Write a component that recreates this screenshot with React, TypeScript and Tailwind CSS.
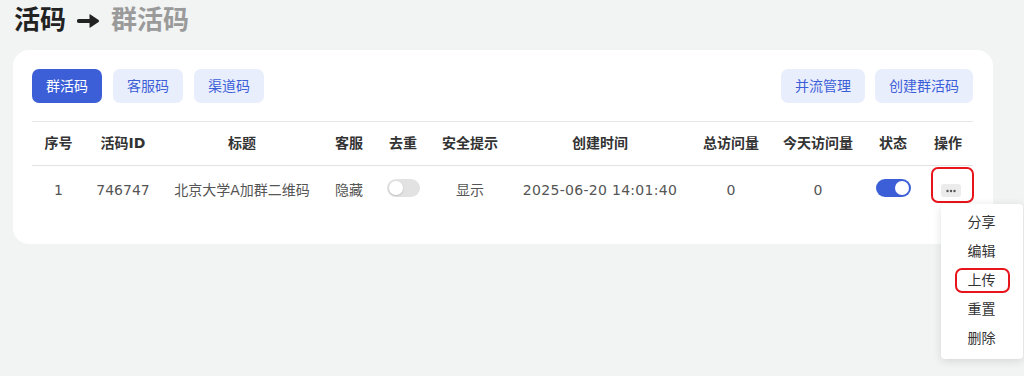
import React from "react";

const FONT = '"DejaVu Sans", "Noto Sans CJK SC", sans-serif';

const cols = [
  { w: 59, cls: "pr-[6px]" },
  { w: 91, cls: "pr-[27px]" },
  { w: 114, cls: "pl-[6px]" },
  { w: 80, cls: "pl-[26px]" },
  { w: 60, cls: "pr-[6px]" },
  { w: 99, cls: "pr-[31px]" },
  { w: 130, cls: "" },
  { w: 110, cls: "pl-[22px]" },
  { w: 81, cls: "pl-[5px]" },
  { w: 64, cls: "pl-[10px]" },
  { w: 53, cls: "pl-[3px]" },
];

const gridCls =
  "grid grid-cols-[59px_91px_114px_80px_60px_99px_130px_110px_81px_64px_53px]";

function Toggle({ on }: { on: boolean }) {
  return on ? (
    <div className="w-[35px] h-[18px] rounded-full bg-[#3c5fd8] flex items-center justify-end pr-[2px] mb-[5px]">
      <div className="w-[14px] h-[14px] rounded-full bg-white" />
    </div>
  ) : (
    <div className="w-[33px] h-[18px] rounded-full bg-[#e2e2e2] flex items-center justify-start pl-[2px] mb-[5px]">
      <div className="w-[14px] h-[14px] rounded-full bg-white shadow-[0_1px_2px_rgba(0,0,0,0.15)]" />
    </div>
  );
}

export default function App() {
  const headers = [
    "序号",
    "活码ID",
    "标题",
    "客服",
    "去重",
    "安全提示",
    "创建时间",
    "总访问量",
    "今天访问量",
    "状态",
    "操作",
  ];
  const menu = ["分享", "编辑", "上传", "重置", "删除"];

  return (
    <div
      className="w-[1024px] h-[376px] bg-[#f2f3f3] overflow-hidden"
      style={{ fontFamily: FONT }}
    >
      <div className="h-[50px] pl-[14px] pt-[7px]">
        <div className="flex items-center text-[26px] leading-[26px] font-bold whitespace-nowrap">
          <span className="text-[#222222]">活码</span>
          <svg
            className="mx-[11px] mt-[1px]"
            width="23"
            height="16"
            viewBox="0 0 23 16"
          >
            <path
              d="M2 8 H15"
              stroke="#222222"
              strokeWidth="4.2"
              strokeLinecap="round"
            />
            <path
              d="M12.5 2.2 Q12.2 1 13.4 1.4 L21.6 7 Q22.6 8 21.6 9 L13.4 14.6 Q12.2 15 12.5 13.8 Z"
              fill="#222222"
            />
          </svg>
          <span className="text-[#9a9a9a]">群活码</span>
        </div>
      </div>

      <div className="w-[980px] ml-[13px] bg-white rounded-[16px] pt-[19px] pl-[19px] pr-[20px] pb-[30px]">
        <div className="flex items-center justify-between">
          <div className="flex gap-[11px]">
            <button className="h-[34px] px-[14px] rounded-[7px] bg-[#3c5fd8] text-white text-[14px]">
              群活码
            </button>
            <button className="h-[34px] px-[14px] rounded-[7px] bg-[#e9eefc] text-[#3c5fd8] text-[14px]">
              客服码
            </button>
            <button className="h-[34px] px-[14px] rounded-[7px] bg-[#e9eefc] text-[#3c5fd8] text-[14px]">
              渠道码
            </button>
          </div>
          <div className="flex gap-[10px]">
            <button className="h-[34px] px-[14px] rounded-[7px] bg-[#e9eefc] text-[#3c5fd8] text-[14px]">
              并流管理
            </button>
            <button className="h-[34px] px-[14px] rounded-[7px] bg-[#e9eefc] text-[#3c5fd8] text-[14px]">
              创建群活码
            </button>
          </div>
        </div>

        <div className="mt-[18px] border-t border-[#e6e6e6]">
          <div className={`${gridCls} h-[44px] items-center border-b border-[#e3e3e3]`}>
            {headers.map((h, i) => (
              <div
                key={h}
                className={`flex justify-center whitespace-nowrap text-[14px] font-bold text-[#333333] ${cols[i].cls}`}
              >
                {h}
              </div>
            ))}
          </div>

          <div className={`${gridCls} h-[48px] items-center text-[14px] text-[#555555]`}>
            <div className={`flex justify-center whitespace-nowrap ${cols[0].cls}`}>1</div>
            <div className={`flex justify-center whitespace-nowrap ${cols[1].cls}`}>746747</div>
            <div className={`flex justify-center whitespace-nowrap ${cols[2].cls}`}>北京大学A加群二维码</div>
            <div className={`flex justify-center whitespace-nowrap ${cols[3].cls}`}>隐藏</div>
            <div className={`flex justify-center whitespace-nowrap ${cols[4].cls}`}>
              <Toggle on={false} />
            </div>
            <div className={`flex justify-center whitespace-nowrap ${cols[5].cls}`}>显示</div>
            <div className={`flex justify-center whitespace-nowrap tracking-[0.3px] ${cols[6].cls}`}>
              2025-06-20 14:01:40
            </div>
            <div className={`flex justify-center whitespace-nowrap ${cols[7].cls}`}>0</div>
            <div className={`flex justify-center whitespace-nowrap ${cols[8].cls}`}>0</div>
            <div className={`flex justify-center whitespace-nowrap ${cols[9].cls}`}>
              <Toggle on={true} />
            </div>
            <div className={`flex justify-center whitespace-nowrap ${cols[10].cls}`}>
              <div className="relative w-[20px] h-[13px] ml-[5px]">
                <div className="w-[20px] h-[13px] rounded-[3px] bg-[#ebebeb] flex items-center justify-center">
                  <svg width="20" height="13" viewBox="0 0 20 13">
                    <circle cx="6.5" cy="7" r="1.2" fill="#555" />
                    <circle cx="10" cy="7" r="1.2" fill="#555" />
                    <circle cx="13.5" cy="7" r="1.2" fill="#555" />
                  </svg>
                </div>
                <div className="absolute left-[-10px] top-[-17px] w-[43px] h-[36px] border-2 border-[#e8141b] rounded-[7px]" />
                <div className="absolute left-0 top-[20px] w-[82px] bg-white rounded-[4px] shadow-[0_2px_10px_rgba(0,0,0,0.12)] pt-[4px] pb-[6px] z-10">
                  {menu.map((m) => (
                    <div
                      key={m}
                      className="relative h-[29px] flex items-center justify-center text-[14px] text-[#333333]"
                    >
                      {m}
                      {m === "上传" && (
                        <div className="absolute left-[14px] top-[2px] w-[55px] h-[25px] border-2 border-[#e8141b] rounded-[7px]" />
                      )}
                    </div>
                  ))}
                </div>
              </div>
            </div>
          </div>
        </div>
      </div>
    </div>
  );
}
